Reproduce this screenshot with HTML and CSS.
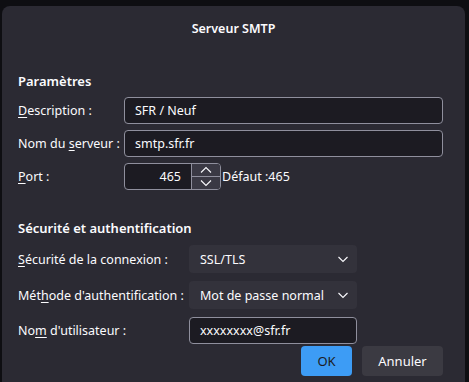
FILE: index.html
```html
<!DOCTYPE html>
<html lang="fr">
<head>
  <meta charset="UTF-8" />
  <title>Serveur SMTP</title>
  <link rel="stylesheet" href="styles.css">
</head>
<body>

  <div class="dialog">
    <div class="dialog-title">Serveur SMTP</div>

    <h2 class="section-title">Paramètres</h2>
    <div class="form-grid settings">
      <label><u>D</u>escription :</label>
      <div class="field wide">SFR / Neuf</div>

      <label>Nom du <u>s</u>erveur :</label>
      <div class="field wide">smtp.sfr.fr</div>

      <label><u>P</u>ort :</label>
      <div class="port-row">
        <div class="spinbox">
          <span class="spin-value">465</span>
          <span class="spin-buttons">
            <span class="spin-btn">
              <svg width="14" height="8" viewBox="0 0 14 8"><path d="M2 6.5 L7 1.5 L12 6.5" fill="none" stroke="#fbfbfe" stroke-width="1.1"/></svg>
            </span>
            <span class="spin-btn">
              <svg width="14" height="8" viewBox="0 0 14 8"><path d="M2 1.5 L7 6.5 L12 1.5" fill="none" stroke="#fbfbfe" stroke-width="1.1"/></svg>
            </span>
          </span>
        </div>
        <span class="default-port">Défaut :465</span>
      </div>
    </div>

    <h2 class="section-title security">Sécurité et authentification</h2>
    <div class="form-grid auth">
      <label><u>S</u>écurité de la connexion :</label>
      <div class="select">
        <span>SSL/TLS</span>
        <svg width="12" height="8" viewBox="0 0 12 8"><path d="M1.5 2 L6 6.5 L10.5 2" fill="none" stroke="#fbfbfe" stroke-width="1.1"/></svg>
      </div>

      <label>Mét<u>h</u>ode d'authentification :</label>
      <div class="select">
        <span>Mot de passe normal</span>
        <svg width="12" height="8" viewBox="0 0 12 8"><path d="M1.5 2 L6 6.5 L10.5 2" fill="none" stroke="#fbfbfe" stroke-width="1.1"/></svg>
      </div>

      <label>No<u>m</u> d'utilisateur :</label>
      <div class="field">xxxxxxxx@sfr.fr</div>
    </div>

    <div class="actions">
      <button class="btn primary">OK</button>
      <button class="btn">Annuler</button>
    </div>
  </div>

</body>
</html>
```

FILE: styles.css
```css
body {
  margin: 0;
  padding: 0;
  background-color: #0e0e12;
  font-family: "Noto Sans", "Open Sans", sans-serif;
  font-size: 12.5px;
  color: #fbfbfe;
  height: 382px;
  overflow: hidden;
}

.dialog {
  margin: 6px 4px 0 2px;
  height: 390px;
  background-color: #2b2a33;
  border-radius: 8px;
  padding: 0 22px 0 16px;
  box-sizing: border-box;
}

.dialog-title {
  text-align: center;
  font-weight: 600;
  padding-top: 14px;
  height: 40px;
  box-sizing: border-box;
  padding-left: 6px;
}

.section-title {
  font-size: 13px;
  font-weight: 600;
  margin: 25px 0 0 0;
  height: 20px;
  line-height: 20px;
}
.section-title.security {
  margin-top: 28px;
}

label u {
  text-decoration: underline;
  text-underline-offset: 2px;
}

.form-grid {
  display: grid;
  align-items: center;
  row-gap: 6px;
}
.form-grid.settings {
  grid-template-columns: 106px 1fr;
  margin-top: 6px;
}
.form-grid.auth {
  grid-template-columns: 171px 168px;
  margin-top: 7px;
  row-gap: 8px;
}

.field {
  height: 27px;
  box-sizing: border-box;
  background-color: #1c1b22;
  border: 1px solid #8f8f9d;
  border-radius: 4px;
  padding: 0 10px;
  line-height: 25px;
}

.port-row {
  display: flex;
  align-items: center;
}

.spinbox {
  display: flex;
  width: 97px;
  height: 27px;
  box-sizing: border-box;
  background-color: #1c1b22;
  border: 1px solid #8f8f9d;
  border-radius: 4px;
  overflow: hidden;
}
.spin-value {
  flex: 1;
  text-align: right;
  padding-right: 10px;
  line-height: 25px;
}
.spin-buttons {
  display: flex;
  flex-direction: column;
  width: 28px;
  border-left: 1px solid #8f8f9d;
}
.spin-btn {
  flex: 1;
  display: flex;
  align-items: center;
  justify-content: center;
  background-color: #3a3944;
}
.spin-btn + .spin-btn {
  border-top: 1px solid #8f8f9d;
}
.default-port {
  margin-left: 1px;
}

.select {
  display: flex;
  justify-content: space-between;
  align-items: center;
  height: 28px;
  box-sizing: border-box;
  background-color: #33323b;
  border-radius: 4px;
  padding: 0 8px 0 11px;
}

.actions {
  display: flex;
  justify-content: flex-end;
  gap: 10px;
  margin-top: 2px;
}

.btn {
  font-family: inherit;
  font-size: 13px;
  height: 30px;
  border: none;
  border-radius: 4px;
  background-color: #3b3a42;
  color: #fbfbfe;
  padding: 0;
  width: 81px;
}
.btn.primary {
  width: 51px;
  background-color: #3d9cf5;
  color: #1c1b22;
}
```
